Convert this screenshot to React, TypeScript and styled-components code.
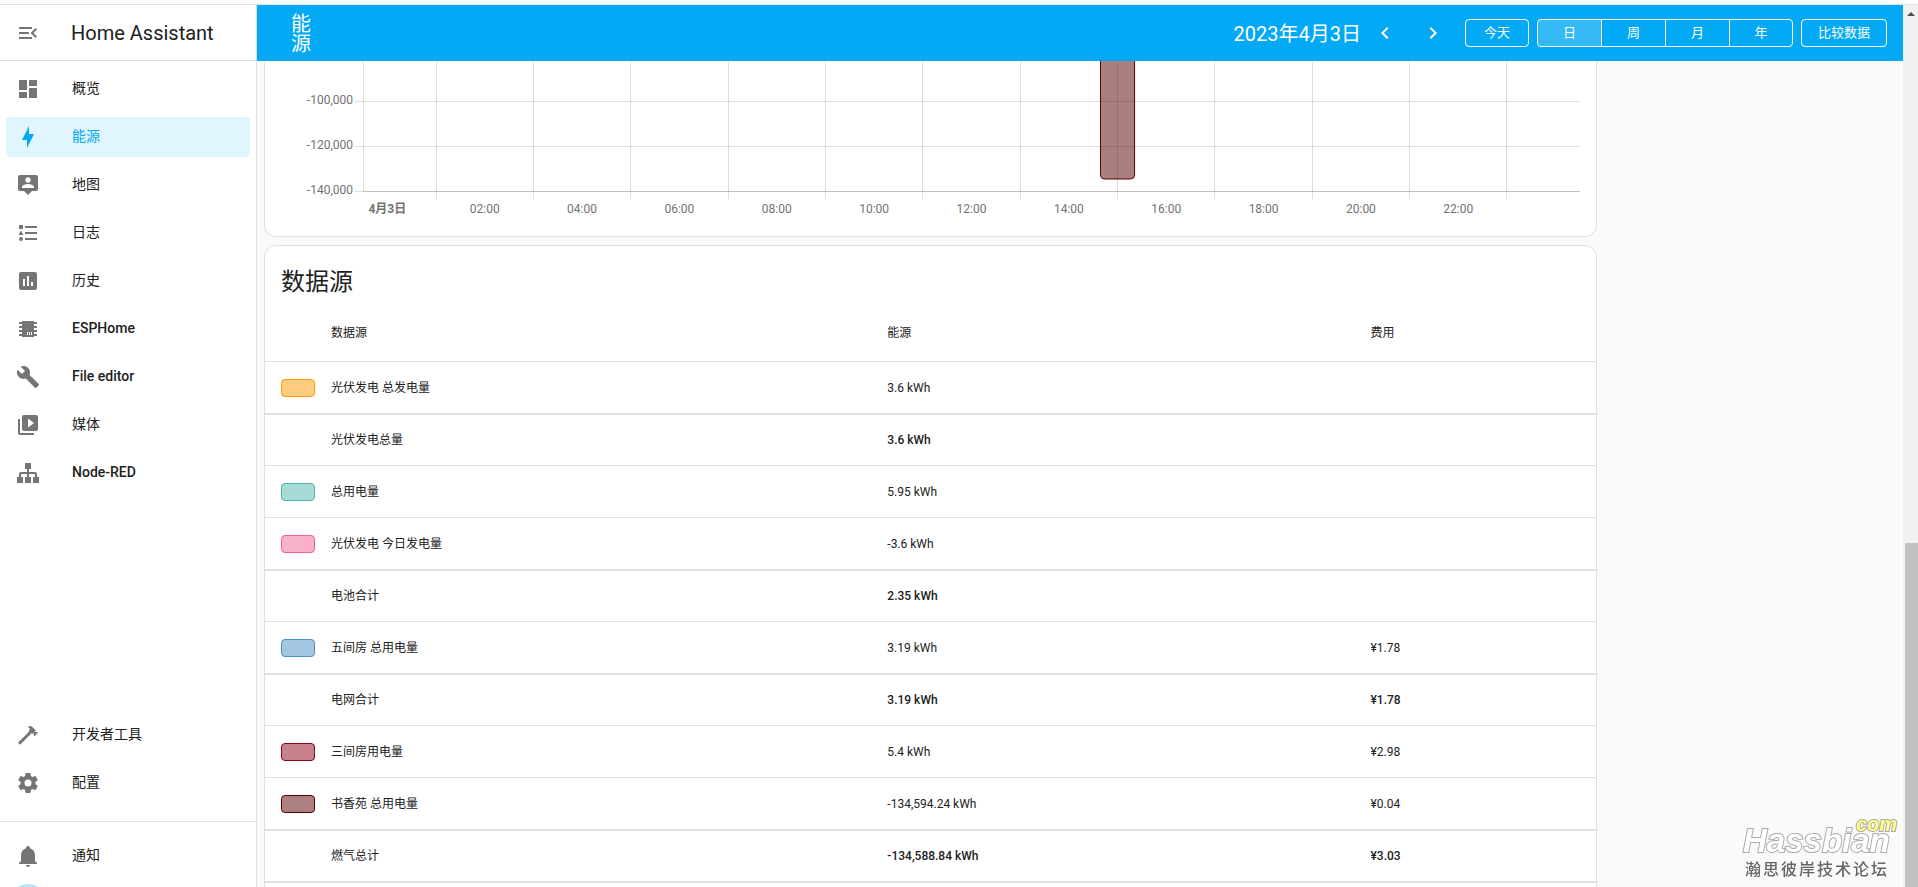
import React from "react";
import styled, { createGlobalStyle, css } from "styled-components";

const GlobalStyle = createGlobalStyle`
  *, *::before, *::after { box-sizing: border-box; }
  body {
    margin: 0;
    overflow: hidden;
    background: #fafafa;
    color: #212121;
    font-family: Roboto, "Noto Sans CJK SC", sans-serif;
    font-size: 14px;
  }
  button { font-family: inherit; cursor: pointer; }
  a { color: inherit; text-decoration: none; }
`;

const icons = {
  menuOpen:
    "M21,15.61L19.59,17L14.58,12L19.59,7L21,8.39L17.44,12L21,15.61M3,6H16V8H3V6M3,13V11H13V13H3M3,18V16H16V18H3Z",
  dashboard: "M13,3V9H21V3M13,21H21V11H13M3,21H11V15H3M3,13H11V3H3V13Z",
  bolt: "M11 15H6L13 1V9H18L11 23V15Z",
  map: "M20,2H4A2,2 0 0,0 2,4V16A2,2 0 0,0 4,18H8L12,22L16,18H20A2,2 0 0,0 22,16V4A2,2 0 0,0 20,2M12,4.3C13.5,4.3 14.7,5.5 14.7,7C14.7,8.5 13.5,9.7 12,9.7C10.5,9.7 9.3,8.5 9.3,7C9.3,5.5 10.5,4.3 12,4.3M18,15H6V14.1C6,12.1 10,11 12,11C14,11 18,12.1 18,14.1V15Z",
  logbook:
    "M5,9.5L7.5,14H2.5L5,9.5M3,4H7V8H3V4M5,20A2,2 0 0,0 7,18A2,2 0 0,0 5,16A2,2 0 0,0 3,18A2,2 0 0,0 5,20M9,5V7H21V5H9M9,19H21V17H9V19M9,13H21V11H9V13Z",
  history:
    "M9 17H7V10H9V17M13 17H11V7H13V17M17 17H15V13H17V17M19 3H5C3.89 3 3 3.89 3 5V19C3 20.11 3.9 21 5 21H19C20.11 21 21 20.11 21 19V5C21 3.9 20.1 3 19 3Z",
  chip: "M6,4H18V5H21V7H18V9H21V11H18V13H21V15H18V17H21V19H18V20H6V19H3V17H6V15H3V13H6V11H3V9H6V7H3V5H6V4M11,15V18H12V15H11M13,15V18H14V15H13M15,15V18H16V15H15Z",
  wrench:
    "M22.7,19L13.6,9.9C14.5,7.6 14,4.9 12.1,3C10.1,1 7.1,0.6 4.7,1.7L9,6L6,9L1.6,4.7C0.4,7.1 0.9,10.1 2.9,12.1C4.8,14 7.5,14.5 9.8,13.6L18.9,22.7C19.3,23.1 19.9,23.1 20.3,22.7L22.6,20.4C23.1,20 23.1,19.3 22.7,19Z",
  media:
    "M4,6H2V20A2,2 0 0,0 4,22H18V20H4V6M20,2H8A2,2 0 0,0 6,4V16A2,2 0 0,0 8,18H20A2,2 0 0,0 22,16V4A2,2 0 0,0 20,2M12,14.5V5.5L18,10L12,14.5Z",
  sitemap:
    "M9,2V8H11V11H5C3.89,11 3,11.89 3,13V16H1V22H7V16H5V13H11V16H9V22H15V16H13V13H19V16H17V22H23V16H21V13C21,11.89 20.11,11 19,11H13V8H15V2H9Z",
  hammer:
    "M2,19.63L13.43,8.2L12.72,7.5L14.14,6.07L12,3.89C13.2,2.7 15.09,2.7 16.27,3.89L19.87,7.5L18.45,8.91H21.29L22,9.62L18.45,13.21L17.74,12.5V9.62L16.27,11.04L15.56,10.33L4.13,21.76L2,19.63Z",
  cog: "M12,15.5A3.5,3.5 0 0,1 8.5,12A3.5,3.5 0 0,1 12,8.5A3.5,3.5 0 0,1 15.5,12A3.5,3.5 0 0,1 12,15.5M19.43,12.97C19.47,12.65 19.5,12.33 19.5,12C19.5,11.67 19.47,11.34 19.43,11L21.54,9.37C21.73,9.22 21.78,8.95 21.66,8.73L19.66,5.27C19.54,5.05 19.27,4.96 19.05,5.05L16.56,6.05C16.04,5.66 15.5,5.32 14.87,5.07L14.5,2.42C14.46,2.18 14.25,2 14,2H10C9.75,2 9.54,2.18 9.5,2.42L9.13,5.07C8.5,5.32 7.96,5.66 7.44,6.05L4.95,5.05C4.73,4.96 4.46,5.05 4.34,5.27L2.34,8.73C2.21,8.95 2.27,9.22 2.46,9.37L4.57,11C4.53,11.34 4.5,11.67 4.5,12C4.5,12.33 4.53,12.65 4.57,12.97L2.46,14.63C2.27,14.78 2.21,15.05 2.34,15.27L4.34,18.73C4.46,18.95 4.73,19.03 4.95,18.95L7.44,17.94C7.96,18.34 8.5,18.68 9.13,18.93L9.5,21.58C9.54,21.82 9.75,22 10,22H14C14.25,22 14.46,21.82 14.5,21.58L14.87,18.93C15.5,18.67 16.04,18.34 16.56,17.94L19.05,18.95C19.27,19.03 19.54,18.95 19.66,18.73L21.66,15.27C21.78,15.05 21.73,14.78 21.54,14.63L19.43,12.97Z",
  bell: "M21,19V20H3V19L5,17V11C5,7.9 7.03,5.17 10,4.29C10,4.19 10,4.1 10,4A2,2 0 0,1 12,2A2,2 0 0,1 14,4C14,4.1 14,4.19 14,4.29C16.97,5.17 19,7.9 19,11V17L21,19M14,21A2,2 0 0,1 12,23A2,2 0 0,1 10,21",
  chevronLeft: "M15.41,16.58L10.83,12L15.41,7.41L14,6L8,12L14,18L15.41,16.58Z",
  chevronRight: "M8.59,16.58L13.17,12L8.59,7.41L10,6L16,12L10,18L8.59,16.58Z",
};

type IconName = keyof typeof icons;

const IconSvg = styled.svg`
  width: 24px;
  height: 24px;
  flex: none;
  fill: currentColor;
  fill-rule: evenodd;
`;

const Icon = ({ name }: { name: IconName }) => (
  <IconSvg viewBox="0 0 24 24" aria-hidden="true">
    <path d={icons[name]} />
  </IconSvg>
);

/* ---------- shell ---------- */

const Page = styled.div`
  height: 100vh;
  display: flex;
  flex-direction: column;
  overflow: hidden;
`;

const TopStrip = styled.div`
  flex: none;
  height: 5px;
  background: #fff;
  border-bottom: 1px solid #dfe1e5;
`;

const Shell = styled.div`
  flex: 1;
  min-height: 0;
  display: flex;
`;

/* ---------- sidebar ---------- */

const Sidebar = styled.aside`
  flex: none;
  width: 257px;
  display: flex;
  flex-direction: column;
  background: #fff;
  border-right: 1px solid #e0e0e0;
`;

const SidebarHeader = styled.div`
  flex: none;
  height: 56px;
  display: flex;
  align-items: center;
  gap: 31px;
  padding: 0 16px;
  border-bottom: 1px solid #e0e0e0;
  font-size: 20px;
`;

const MenuButton = styled.button`
  display: flex;
  padding: 0;
  border: 0;
  background: none;
  color: #757575;
`;

const NavList = styled.nav`
  display: flex;
  flex-direction: column;
  gap: 8px;
  padding: 8px 6px;
`;

const MainNav = styled(NavList)`
  flex: 1;
`;

const ToolsNav = styled(NavList)`
  padding: 0 6px 18px;
  border-bottom: 1px solid #e0e0e0;
`;

const UserNav = styled(NavList)`
  height: 65px;
  padding: 14px 6px 0;
  overflow: hidden;
`;

const NavItem = styled.a<{ $active?: boolean; $latin?: boolean }>`
  flex: none;
  height: 40px;
  display: flex;
  align-items: center;
  gap: 32px;
  padding: 0 10px;
  border-radius: 4px;
  font-weight: ${(p) => (p.$latin ? 500 : 400)};

  svg {
    color: #757575;
  }

  ${(p) =>
    p.$active &&
    css`
      background: #e1f5fe;
      &,
      svg {
        color: #03a9f4;
      }
    `}
`;

const NavLabel = styled.span`
  padding-bottom: 3px;
  line-height: 20px;
`;

const ProfileItem = styled.a`
  flex: none;
  width: 40px;
  height: 40px;
  margin-left: 2px;
  border-radius: 50%;
  background: #b3e5fc;
`;

/* ---------- toolbar ---------- */

const Main = styled.main`
  flex: 1;
  min-width: 0;
  display: flex;
  flex-direction: column;
`;

const Toolbar = styled.header`
  flex: none;
  height: 56px;
  display: flex;
  align-items: center;
  gap: 8px;
  padding: 0 16px 0 34px;
  background: #03a9f4;
  color: #fff;
`;

const ToolbarTitle = styled.h1`
  width: 20px;
  margin: 0 auto 0 0;
  padding-top: 2px;
  font-size: 20px;
  line-height: 20px;
  font-weight: 400;
`;

const DateNav = styled.div`
  display: flex;
  align-items: center;
`;

const DateLabel = styled.span`
  padding-bottom: 2px;
  font-size: 20px;
`;

const IconButton = styled.button`
  width: 48px;
  height: 48px;
  display: flex;
  align-items: center;
  justify-content: center;
  padding: 0;
  border: 0;
  background: none;
  color: #fff;
`;

const OutlineButton = styled.button`
  min-width: 64px;
  height: 28px;
  padding: 0 16px;
  border: 1px solid #fff;
  border-radius: 4px;
  background: none;
  color: #fff;
  font-size: 13px;
  line-height: 16px;
`;

const ToggleGroup = styled.div`
  display: flex;
  height: 28px;
  border: 1px solid #fff;
  border-radius: 4px;
  overflow: hidden;
`;

const ToggleButton = styled.button<{ $active?: boolean }>`
  width: 64px;
  padding: 0;
  border: 0;
  border-right: 1px solid #fff;
  background: ${(p) => (p.$active ? "rgba(255, 255, 255, 0.2)" : "none")};
  color: #fff;
  font-size: 13px;
  line-height: 16px;

  &:last-child {
    width: 62px;
    border-right: 0;
  }
`;

/* ---------- content ---------- */

const Content = styled.div`
  flex: 1;
  min-height: 0;
  overflow: hidden;
  display: grid;
  grid-template-columns: minmax(0, 1fr) 298px;
  gap: 8px;
  padding: 0 0 0 7px;
`;

const Column = styled.div`
  display: flex;
  flex-direction: column;
  gap: 8px;
`;

const Card = styled.section`
  flex: none;
  background: #fff;
  border: 1px solid #e0e0e0;
  border-radius: 12px;
  overflow: hidden;
`;

const ChartCard = styled(Card)`
  border-top: 0;
  border-radius: 0 0 12px 12px;
  padding: 0 16px 16px 98px;
`;

const ChartSvg = styled.svg`
  display: block;
  width: 100%;
  height: 159px;
  overflow: visible;

  line {
    stroke: rgba(0, 0, 0, 0.13);
    shape-rendering: crispEdges;
  }
  text {
    fill: #727272;
    font-size: 12px;
  }
`;

const CardTitle = styled.h2`
  margin: 0;
  padding: 13px 16px 0;
  font-size: 24px;
  line-height: 46px;
  font-weight: 400;
`;

const Table = styled.table`
  width: 100%;
  table-layout: fixed;
  border-collapse: separate;
  border-spacing: 0;
  font-size: 12px;
  line-height: 16px;
  text-align: left;
`;

const HeadCell = styled.th`
  height: 56px;
  padding: 0 16px;
  font-weight: 400;
`;

const Cell = styled.td<{ $total?: boolean }>`
  height: 52px;
  padding: 0 16px;
  border-top: ${(p) => (p.$total ? 2 : 1)}px solid #e0e0e0;
  font-weight: ${(p) => (p.$total ? 500 : 400)};
`;

const NameCell = styled(Cell).attrs({ as: "th", scope: "row" })`
  font-weight: 400;
`;

const SwatchCell = styled(Cell)`
  padding: 0 0 0 16px;
`;

const Swatch = styled.div<{ $color: string }>`
  width: 34px;
  height: 18px;
  border: 1px solid ${(p) => p.$color};
  border-radius: 4px;
  background: color-mix(in srgb, ${(p) => p.$color} 50%, white);
`;

const Col = styled.col<{ $w?: string }>`
  width: ${(p) => p.$w ?? "auto"};
`;

/* ---------- scrollbar ---------- */

const ScrollTrack = styled.div`
  flex: none;
  width: 15px;
  display: flex;
  flex-direction: column;
  align-items: flex-end;
  background: #f1f1f1;
`;

const ScrollArrow = styled.svg`
  width: 15px;
  height: 17px;
  fill: #505050;
`;

const ScrollThumb = styled.div`
  width: 13px;
  height: 39%;
  margin-top: auto;
  background: #c1c1c1;
`;

/* ---------- forum watermark ---------- */

const Watermark = styled.div`
  position: fixed;
  right: 21px;
  bottom: 5px;
  width: 154px;
  color: #666;
`;

const Brand = styled.div`
  font: italic bold 33px/34px "Liberation Sans", sans-serif;
  color: #fff;
  -webkit-text-stroke: 2px #aaa;
  paint-order: stroke fill;
`;

const BrandSuffix = styled.div`
  position: absolute;
  right: 0;
  top: -12px;
  font: italic bold 20px/24px "Liberation Sans", sans-serif;
  color: #ffff80;
  -webkit-text-stroke: 2px #aaa;
  paint-order: stroke fill;
`;

const BrandCaption = styled.div`
  padding-left: 2px;
  font-size: 16px;
  line-height: 24px;
  letter-spacing: 2px;
  font-weight: 500;
`;

/* ---------- data ---------- */

type NavEntry = { icon: IconName; label: string; latin?: boolean; active?: boolean };

const mainNav: NavEntry[] = [
  { icon: "dashboard", label: "概览" },
  { icon: "bolt", label: "能源", active: true },
  { icon: "map", label: "地图" },
  { icon: "logbook", label: "日志" },
  { icon: "history", label: "历史" },
  { icon: "chip", label: "ESPHome", latin: true },
  { icon: "wrench", label: "File editor", latin: true },
  { icon: "media", label: "媒体" },
  { icon: "sitemap", label: "Node-RED", latin: true },
];

const toolsNav: NavEntry[] = [
  { icon: "hammer", label: "开发者工具" },
  { icon: "cog", label: "配置" },
];

type SourceRow = { name: string; energy: string; cost?: string; color?: string };

const rows: SourceRow[] = [
  { name: "光伏发电 总发电量", energy: "3.6 kWh", color: "#ff9800" },
  { name: "光伏发电总量", energy: "3.6 kWh" },
  { name: "总用电量", energy: "5.95 kWh", color: "#4db6ac" },
  { name: "光伏发电 今日发电量", energy: "-3.6 kWh", color: "#f06292" },
  { name: "电池合计", energy: "2.35 kWh" },
  { name: "五间房 总用电量", energy: "3.19 kWh", cost: "¥1.78", color: "#488fc2" },
  { name: "电网合计", energy: "3.19 kWh", cost: "¥1.78" },
  { name: "三间房用电量", energy: "5.4 kWh", cost: "¥2.98", color: "#8e021b" },
  { name: "书香苑 总用电量", energy: "-134,594.24 kWh", cost: "¥0.04", color: "#5a0000" },
  { name: "燃气总计", energy: "-134,588.84 kWh", cost: "¥3.03" },
];

const NavLink = ({ icon, label, latin, active }: NavEntry) => (
  <NavItem href="#" $active={active} $latin={latin} aria-current={active ? "page" : undefined}>
    <Icon name={icon} />
    <NavLabel>{label}</NavLabel>
  </NavItem>
);

/* The time axis spans 25 hours: half an hour is added before 0:00 and after 24:00. */
const hourX = (hour: number) => `${((hour + 0.5) / 25) * 100}%`;

const yTicks = [
  { y: 40, label: "-100,000" },
  { y: 85, label: "-120,000" },
  { y: 130, label: "-140,000" },
];
const evenHours = Array.from({ length: 12 }, (_, i) => i * 2);

const UsageChart = () => (
  <ChartSvg role="img" aria-label="能源">
    <line x1="0" x2="0" y1="0" y2="130" />
    {evenHours.map((h) => (
      <line key={h} x1={hourX(h + 1)} x2={hourX(h + 1)} y1="0" y2="138" />
    ))}
    {yTicks.map((t) => (
      <React.Fragment key={t.y}>
        <line x1="-8" x2="100%" y1={t.y} y2={t.y} />
        <text x="-10" y={t.y + 3} textAnchor="end">
          {t.label}
        </text>
      </React.Fragment>
    ))}
    <line x1="0" x2="100%" y1="130" y2="130" />
    {evenHours.map((h) => (
      <text key={h} x={hourX(h)} y="152" textAnchor="middle" fontWeight={h === 0 ? 700 : 400}>
        {h === 0 ? "4月3日" : `${String(h).padStart(2, "0")}:00`}
      </text>
    ))}
    <svg y="0" width="100%" height="120">
      <rect
        x={hourX(14.65)}
        y="-10"
        width="2.8%"
        height="128"
        rx="4"
        fill="#5a0000"
        fillOpacity="0.5"
        stroke="#5a0000"
      />
    </svg>
  </ChartSvg>
);

const SourcesTable = () => (
  <Table>
    <colgroup>
      <Col $w="50px" />
      <Col $w="41.8%" />
      <Col $w="36.3%" />
      <Col />
    </colgroup>
    <thead>
      <tr>
        <HeadCell />
        <HeadCell scope="col">数据源</HeadCell>
        <HeadCell scope="col">能源</HeadCell>
        <HeadCell scope="col">费用</HeadCell>
      </tr>
    </thead>
    <tbody>
      {rows.map((r) => {
        const total = !r.color;
        return (
          <tr key={r.name}>
            <SwatchCell $total={total}>{r.color && <Swatch $color={r.color} />}</SwatchCell>
            <NameCell $total={total}>{r.name}</NameCell>
            <Cell $total={total}>{r.energy}</Cell>
            <Cell $total={total}>{r.cost}</Cell>
          </tr>
        );
      })}
      <tr>
        <Cell $total colSpan={4} />
      </tr>
    </tbody>
  </Table>
);

export default function App() {
  return (
    <Page>
      <GlobalStyle />
      <TopStrip />
      <Shell>
        <Sidebar>
          <SidebarHeader>
            <MenuButton type="button" aria-label="菜单">
              <Icon name="menuOpen" />
            </MenuButton>
            Home Assistant
          </SidebarHeader>
          <MainNav>
            {mainNav.map((n) => (
              <NavLink key={n.label} {...n} />
            ))}
          </MainNav>
          <ToolsNav>
            {toolsNav.map((n) => (
              <NavLink key={n.label} {...n} />
            ))}
          </ToolsNav>
          <UserNav>
            <NavLink icon="bell" label="通知" />
            <ProfileItem href="#" aria-label="用户" />
          </UserNav>
        </Sidebar>

        <Main>
          <Toolbar>
            <ToolbarTitle>能源</ToolbarTitle>
            <DateNav>
              <DateLabel>2023年4月3日</DateLabel>
              <IconButton type="button" aria-label="前一天">
                <Icon name="chevronLeft" />
              </IconButton>
              <IconButton type="button" aria-label="后一天">
                <Icon name="chevronRight" />
              </IconButton>
            </DateNav>
            <OutlineButton type="button">今天</OutlineButton>
            <ToggleGroup role="group">
              {["日", "周", "月", "年"].map((p, i) => (
                <ToggleButton key={p} type="button" $active={i === 0} aria-pressed={i === 0}>
                  {p}
                </ToggleButton>
              ))}
            </ToggleGroup>
            <OutlineButton type="button">比较数据</OutlineButton>
          </Toolbar>
          <Content>
            <Column>
              <ChartCard>
                <UsageChart />
              </ChartCard>
              <Card>
                <CardTitle>数据源</CardTitle>
                <SourcesTable />
              </Card>
            </Column>
          </Content>
        </Main>

        <ScrollTrack aria-hidden="true">
          <ScrollArrow viewBox="0 0 15 17">
            <path d="M4 11H12L8 7Z" />
          </ScrollArrow>
          <ScrollThumb />
        </ScrollTrack>
      </Shell>
      <Watermark>
        <Brand>Hassbian</Brand>
        <BrandSuffix>com</BrandSuffix>
        <BrandCaption>瀚思彼岸技术论坛</BrandCaption>
      </Watermark>
    </Page>
  );
}
